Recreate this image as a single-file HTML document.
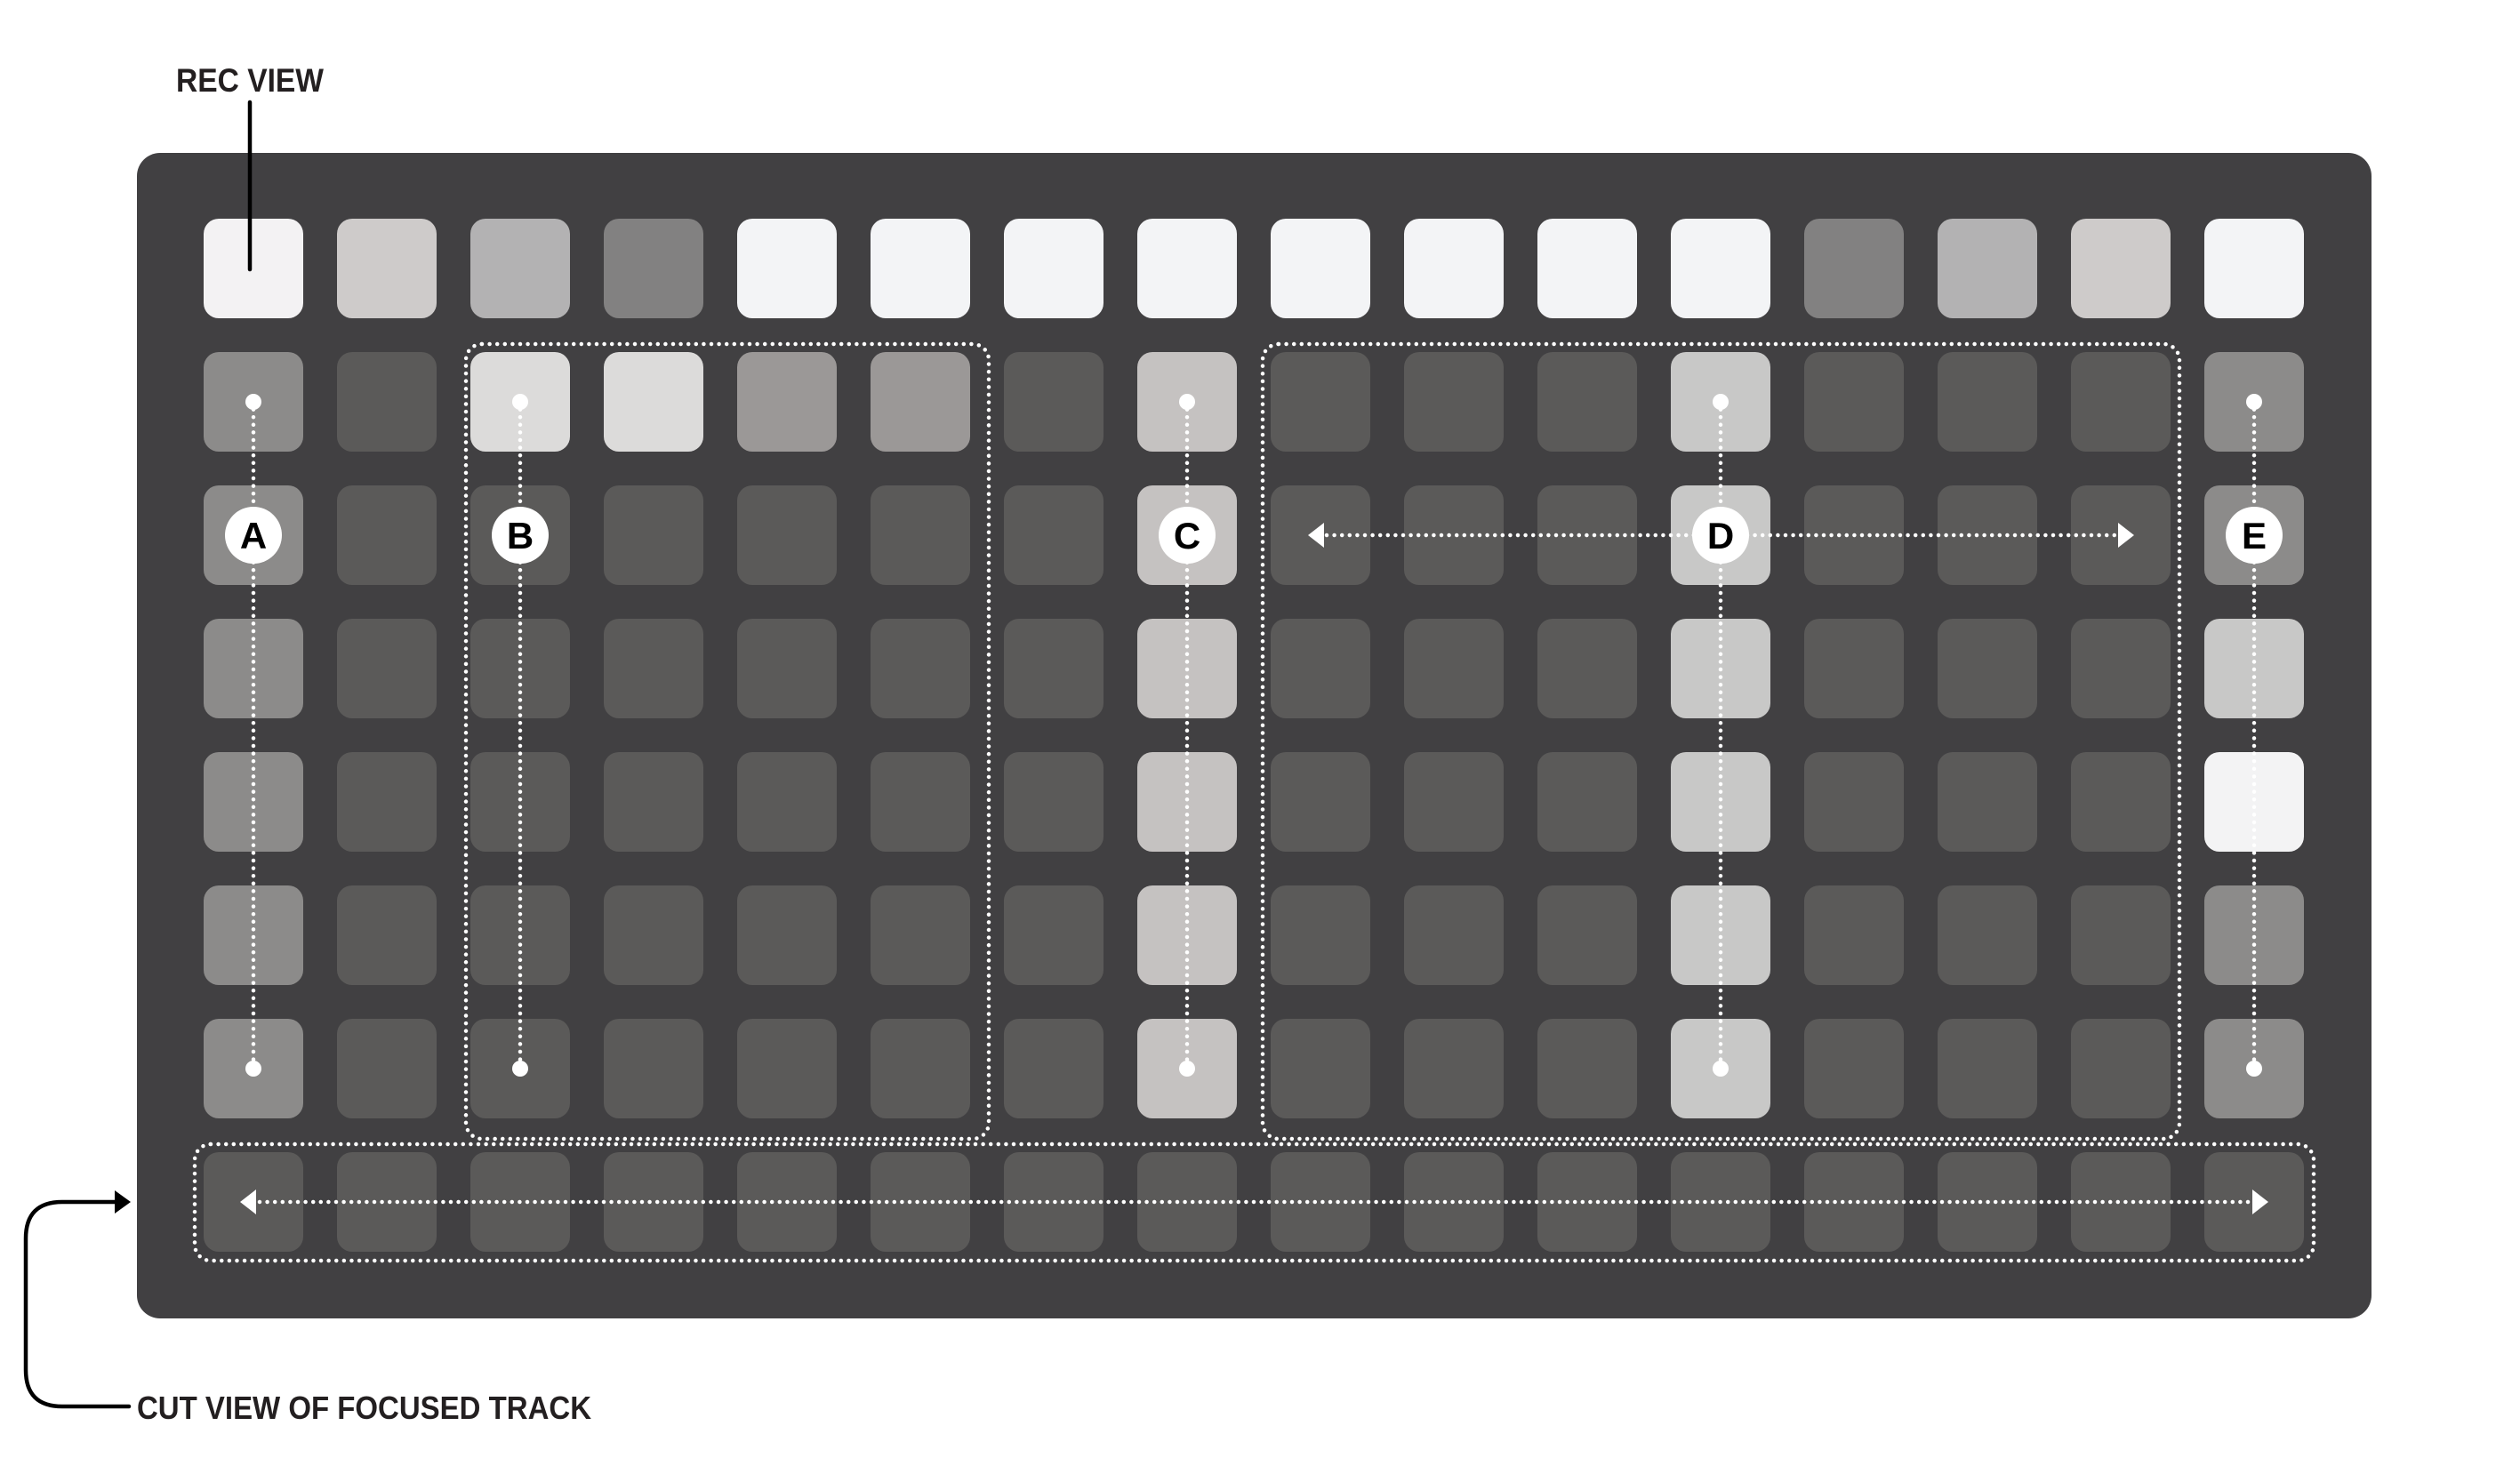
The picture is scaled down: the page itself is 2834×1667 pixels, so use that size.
<!DOCTYPE html>
<html><head><meta charset="utf-8"><style>html,body{margin:0;padding:0;background:#fff;}svg{display:block}</style></head>
<body>
<svg width="2834" height="1667" viewBox="0 0 2834 1667" xmlns="http://www.w3.org/2000/svg">
<defs><rect id="b" width="112" height="112" rx="17"/>
<g id="mid">
<use href="#b" x="229" fill="#8c8b8a"/><use href="#b" x="379" fill="#5b5a59"/><use href="#b" x="529" fill="#5b5a59"/><use href="#b" x="679" fill="#5b5a59"/>
<use href="#b" x="829" fill="#5b5a59"/><use href="#b" x="979" fill="#5b5a59"/><use href="#b" x="1129" fill="#5b5a59"/><use href="#b" x="1279" fill="#c5c2c1"/>
<use href="#b" x="1429" fill="#5b5a59"/><use href="#b" x="1579" fill="#5b5a59"/><use href="#b" x="1729" fill="#5b5a59"/><use href="#b" x="1879" fill="#c8c8c7"/>
<use href="#b" x="2029" fill="#5b5a59"/><use href="#b" x="2179" fill="#5b5a59"/><use href="#b" x="2329" fill="#5b5a59"/>
</g>
</defs>
<rect width="2834" height="1667" fill="#fff"/>
<rect x="154" y="172" width="2513" height="1311" rx="26" fill="#414042"/>
<g transform="translate(0,246)">
<use href="#b" x="229" fill="#f3f2f3"/><use href="#b" x="379" fill="#cecbca"/><use href="#b" x="529" fill="#b3b2b3"/><use href="#b" x="679" fill="#828181"/>
<use href="#b" x="829" fill="#f3f4f6"/><use href="#b" x="979" fill="#f3f4f6"/><use href="#b" x="1129" fill="#f3f4f6"/><use href="#b" x="1279" fill="#f3f4f6"/>
<use href="#b" x="1429" fill="#f3f4f6"/><use href="#b" x="1579" fill="#f3f4f6"/><use href="#b" x="1729" fill="#f3f4f6"/><use href="#b" x="1879" fill="#f3f4f6"/>
<use href="#b" x="2029" fill="#828181"/><use href="#b" x="2179" fill="#b3b2b3"/><use href="#b" x="2329" fill="#cecbca"/><use href="#b" x="2479" fill="#f3f4f6"/>
</g>
<g transform="translate(0,396)">
<use href="#b" x="229" fill="#8c8b8a"/><use href="#b" x="379" fill="#5b5a59"/><use href="#b" x="529" fill="#dcdbda"/><use href="#b" x="679" fill="#dcdbda"/>
<use href="#b" x="829" fill="#9b9897"/><use href="#b" x="979" fill="#9b9897"/><use href="#b" x="1129" fill="#5b5a59"/><use href="#b" x="1279" fill="#c5c2c1"/>
<use href="#b" x="1429" fill="#5b5a59"/><use href="#b" x="1579" fill="#5b5a59"/><use href="#b" x="1729" fill="#5b5a59"/><use href="#b" x="1879" fill="#c8c8c7"/>
<use href="#b" x="2029" fill="#5b5a59"/><use href="#b" x="2179" fill="#5b5a59"/><use href="#b" x="2329" fill="#5b5a59"/><use href="#b" x="2479" fill="#8c8b8a"/>
</g>
<use href="#mid" y="546"/><use href="#mid" y="696"/><use href="#mid" y="846"/><use href="#mid" y="996"/><use href="#mid" y="1146"/>
<use href="#b" x="2479" y="546" fill="#8c8b8a"/>
<use href="#b" x="2479" y="696" fill="#c8c8c7"/>
<use href="#b" x="2479" y="846" fill="#f3f3f4"/>
<use href="#b" x="2479" y="996" fill="#8c8b8a"/>
<use href="#b" x="2479" y="1146" fill="#8c8b8a"/>
<g transform="translate(0,1296)" fill="#5b5a59">
<use href="#b" x="229"/><use href="#b" x="379"/><use href="#b" x="529"/><use href="#b" x="679"/>
<use href="#b" x="829"/><use href="#b" x="979"/><use href="#b" x="1129"/><use href="#b" x="1279"/>
<use href="#b" x="1429"/><use href="#b" x="1579"/><use href="#b" x="1729"/><use href="#b" x="1879"/>
<use href="#b" x="2029"/><use href="#b" x="2179"/><use href="#b" x="2329"/><use href="#b" x="2479"/>
</g>
<g fill="none" stroke="#fff" stroke-width="4.5" stroke-linecap="round" stroke-dasharray="0 8.6">
<rect x="524" y="387" width="588" height="894" rx="18"/>
<rect x="1420" y="387" width="1031" height="894" rx="18"/>
<rect x="219" y="1287" width="2383" height="131" rx="18"/>
<line x1="285" y1="452" x2="285" y2="1202"/>
<line x1="585" y1="452" x2="585" y2="1202"/>
<line x1="1335" y1="452" x2="1335" y2="1202"/>
<line x1="1935" y1="452" x2="1935" y2="1202"/>
<line x1="2535" y1="452" x2="2535" y2="1202"/>
<line x1="1492" y1="602" x2="2382" y2="602"/>
<line x1="292" y1="1352" x2="2530" y2="1352"/>
</g>
<g fill="#fff">
<circle cx="285" cy="452" r="9"/><circle cx="285" cy="1202" r="9"/>
<circle cx="585" cy="452" r="9"/><circle cx="585" cy="1202" r="9"/>
<circle cx="1335" cy="452" r="9"/><circle cx="1335" cy="1202" r="9"/>
<circle cx="1935" cy="452" r="9"/><circle cx="1935" cy="1202" r="9"/>
<circle cx="2535" cy="452" r="9"/><circle cx="2535" cy="1202" r="9"/>
<polygon points="1471,602 1489,588 1489,616"/>
<polygon points="2400,602 2382,588 2382,616"/>
<polygon points="270,1352 288,1338 288,1366"/>
<polygon points="2551,1352 2533,1338 2533,1366"/>
<circle cx="285" cy="602" r="32"/><circle cx="585" cy="602" r="32"/><circle cx="1335" cy="602" r="32"/><circle cx="1935" cy="602" r="32"/><circle cx="2535" cy="602" r="32"/>
</g>
<g font-family="Liberation Sans, sans-serif" font-weight="bold" font-size="42" fill="#000" text-anchor="middle">
<text x="285" y="617">A</text><text x="585" y="617">B</text><text x="1335" y="617">C</text><text x="1935" y="617">D</text><text x="2535" y="617">E</text>
</g>
<g fill="none" stroke="#000" stroke-width="4.5" stroke-linecap="round">
<line x1="281" y1="115" x2="281" y2="303"/>
<path d="M145 1582 H70 Q29 1582 29 1541 V1393 Q29 1352 70 1352 H131"/>
</g>
<polygon points="147,1352 129,1339 129,1365" fill="#000"/>
<g font-family="Liberation Sans, sans-serif" font-weight="bold" fill="#231f20">
<text x="198" y="103" font-size="37" textLength="166" lengthAdjust="spacingAndGlyphs">REC VIEW</text>
<text x="154" y="1596" font-size="36" textLength="511" lengthAdjust="spacingAndGlyphs">CUT VIEW OF FOCUSED TRACK</text>
</g>
</svg>
</body></html>
